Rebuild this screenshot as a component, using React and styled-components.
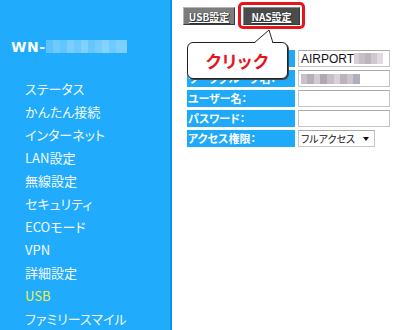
import React from 'react';
import styled, { createGlobalStyle } from 'styled-components';

const GlobalStyle = createGlobalStyle`
  html, body {
    margin: 0;
    padding: 0;
    background: #fff;
  }
  body {
    width: 400px;
    height: 330px;
    overflow: hidden;
    font-family: "Noto Sans CJK JP", "DejaVu Sans", sans-serif;
  }
`;

const Page = styled.div`
  display: flex;
  width: 400px;
  height: 330px;
  overflow: hidden;
`;

const Sidebar = styled.nav`
  width: 170px;
  flex-shrink: 0;
  height: 330px;
  background: #20abfd;
  border-right: 2px solid #0a93e6;
  display: flex;
  flex-direction: column;
  font-feature-settings: "palt";
`;

const Brand = styled.div`
  margin-top: 38px;
  padding-left: 11px;
  height: 18px;
  display: flex;
  align-items: center;
  font-family: "DejaVu Sans", sans-serif;
  font-weight: bold;
  font-size: 14px;
  letter-spacing: 0.5px;
  color: #fff;
`;

const Mosaic = styled.div`
  display: flex;
  height: ${(p) => p.$h}px;
  margin-left: ${(p) => p.$ml || 0}px;
`;

const Tile = styled.span`
  width: ${(p) => p.$w}px;
  height: 100%;
  background: ${(p) => p.$c};
`;

const Menu = styled.ul`
  list-style: none;
  margin: 22px 0 0;
  padding: 0 0 0 25px;
`;

const MenuItem = styled.li`
  height: 23px;
  line-height: 23px;
  font-size: 13px;
  color: ${(p) => (p.$active ? '#ecf24a' : '#f4faff')};
  white-space: nowrap;
`;

const Main = styled.main`
  position: relative;
  flex: 1;
  padding: 2px 0 0 11px;
  font-feature-settings: "palt";
`;

const Tabs = styled.div`
  display: flex;
  align-items: flex-start;
  gap: 3px;
`;

const Tab = styled.div`
  margin-top: ${(p) => (p.$inFrame ? 0 : 5)}px;
  width: ${(p) => p.$w}px;
  height: 18px;
  box-sizing: border-box;
  display: flex;
  align-items: center;
  justify-content: center;
  background: ${(p) => (p.$active ? '#4b4b4b' : '#7c7c7c')};
  border: 1px solid ${(p) => (p.$active ? '#8a8a8a' : '#b4b4b4')};
  border-bottom-color: #3a3a3a;
  border-right-color: #3a3a3a;
  color: #fff;
  font-size: 10px;
  font-weight: bold;
  text-decoration: underline;
  text-shadow: 0 0 1px #222, 1px 1px 0 #333;
`;

const HighlightFrame = styled.div`
  border: 3px solid #e8141c;
  border-radius: 5px;
  padding: 2px 2px 1px 2px;
`;

const Form = styled.div`
  display: grid;
  grid-template-columns: 108px 92px;
  grid-auto-rows: 17px;
  column-gap: 3px;
  row-gap: 3px;
  margin: 21px 0 0 4px;
`;

const Label = styled.div`
  background: #1faaf9;
  color: #fff;
  font-size: 11px;
  font-weight: bold;
  line-height: 17px;
  padding-left: 1px;
  white-space: nowrap;
  overflow: hidden;
`;

const Field = styled.div`
  box-sizing: border-box;
  width: ${(p) => p.$w || 92}px;
  border: 1px solid #c6c6c6;
  border-top-color: #a9a9a9;
  background: #fff;
  display: flex;
  align-items: center;
  padding-left: 2px;
  font-family: "Liberation Sans", "Noto Sans CJK JP", sans-serif;
  font-size: 12px;
  color: #111;
  white-space: nowrap;
`;

const SelectText = styled.span`
  flex: 1;
  font-family: "Noto Sans CJK JP", sans-serif;
  font-size: 10px;
`;

const Arrow = styled.span`
  width: 0;
  height: 0;
  margin-right: 5px;
  border-left: 3px solid transparent;
  border-right: 3px solid transparent;
  border-top: 4px solid #111;
`;

const Callout = styled.div`
  position: absolute;
  left: 15px;
  top: 42px;
  width: 101px;
  height: 37px;
  box-sizing: border-box;
  background: #fff;
  border: 1px solid #222;
  border-radius: 6px;
  box-shadow: 1px 1px 0 #444;
  display: flex;
  align-items: center;
  justify-content: center;
  color: #e8141c;
  font-size: 17px;
  font-weight: bold;
  letter-spacing: 1px;
`;

const Tail = styled.svg`
  position: absolute;
  left: 60px;
  top: -14px;
  overflow: visible;
`;

const brandTiles = [
  ['#5cc2fd', 7], ['#6ecafe', 7], ['#62c5fd', 7], ['#78cefe', 7], ['#6cc8fe', 7],
  ['#7fd1fe', 7], ['#66c6fd', 7], ['#74ccfe', 7], ['#84d3fe', 7], ['#70cafe', 7], ['#7ccffe', 11],
];

const airTiles = [
  ['#d8d0d6', 5], ['#c8bfc6', 6], ['#bdb5bd', 6], ['#cfc8cf', 6], ['#e0dbe0', 6],
];

const groupTiles = [
  ['#c9c1c8', 6], ['#b7afb8', 7], ['#d2cbd1', 6], ['#b0a7b1', 7], ['#c6bec6', 7],
  ['#d8d2d8', 6], ['#bbb2bb', 7], ['#cbc4cb', 6], ['#b3adbb', 7],
];

const menu = [
  'ステータス', 'かんたん接続', 'インターネット', 'LAN設定', '無線設定', 'セキュリティ',
  'ECOモード', 'VPN', '詳細設定', 'USB', 'ファミリースマイル',
];

const renderTiles = (tiles) =>
  tiles.map(([c, w], i) => <Tile key={i} $c={c} $w={w} />);

export default function App() {
  return (
    <>
      <GlobalStyle />
      <Page>
        <Sidebar>
          <Brand>
            WN-
            <Mosaic $h={13} $ml={1}>{renderTiles(brandTiles)}</Mosaic>
          </Brand>
          <Menu>
            {menu.map((m) => (
              <MenuItem key={m} $active={m === 'USB'}>{m}</MenuItem>
            ))}
          </Menu>
        </Sidebar>

        <Main>
          <Tabs>
            <Tab $w={52}>USB設定</Tab>
            <HighlightFrame>
              <Tab $w={57} $active $inFrame>NAS設定</Tab>
            </HighlightFrame>
          </Tabs>

          <Form>
            <Label />
            <Field>
              AIRPORT
              <Mosaic $h={11}>{renderTiles(airTiles)}</Mosaic>
            </Field>
            <Label>ワークグループ名：</Label>
            <Field>
              <Mosaic $h={10}>{renderTiles(groupTiles)}</Mosaic>
            </Field>
            <Label>ユーザー名：</Label>
            <Field />
            <Label>パスワード：</Label>
            <Field />
            <Label>アクセス権限：</Label>
            <Field $w={77}>
              <SelectText>フルアクセス</SelectText>
              <Arrow />
            </Field>
          </Form>

          <Callout>
            クリック
            <Tail width="30" height="16">
              <polygon points="6,14.5 21,1 25,14.5" fill="#fff" stroke="none" />
              <polyline points="6,14 21,1 25,14" fill="none" stroke="#222" strokeWidth="1" />
            </Tail>
          </Callout>
        </Main>
      </Page>
    </>
  );
}
